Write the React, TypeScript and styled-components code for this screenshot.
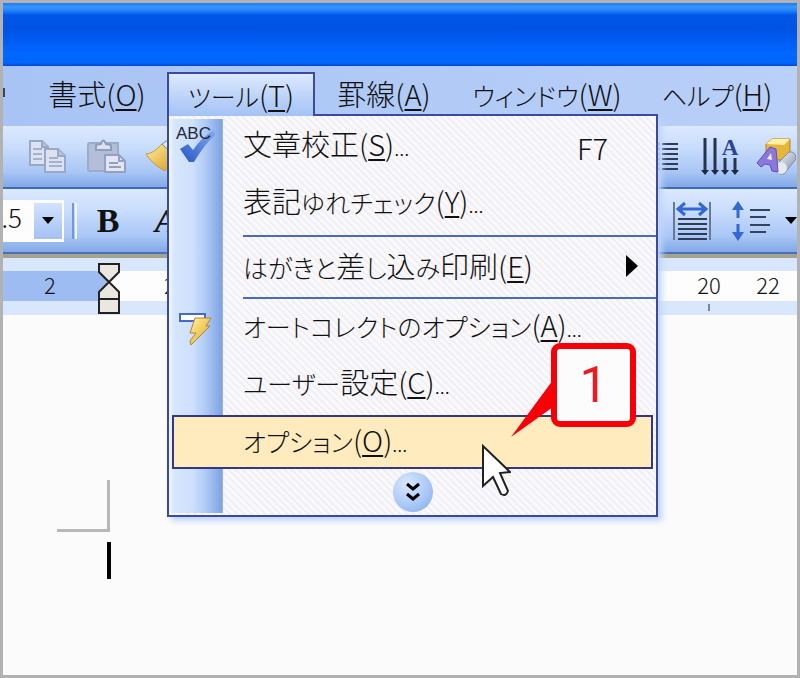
import React from "react";
import styled, { createGlobalStyle, css } from "styled-components";

const GlobalStyle = createGlobalStyle`
  * { box-sizing: border-box; }
  html, body { margin: 0; padding: 0; }
  body {
    background: #fbfbfb;
    color: #101010;
    font-family: "Noto Sans CJK JP", "Liberation Sans", sans-serif;
    font-weight: 300;
    font-feature-settings: "palt";
  }
  button, input {
    margin: 0;
    padding: 0;
    border: 0;
    background: none;
    color: inherit;
    font: inherit;
    font-feature-settings: inherit;
  }
  ul { margin: 0; padding: 0; list-style: none; }
  svg { flex: none; }
`;

const Window = styled.main`
  display: flex;
  flex-direction: column;
  width: 100%;
  min-height: 100vh;
  overflow: hidden;
  background: #fbfbfb;
  border: 3px solid #b2b2b2;
`;

const TitleBar = styled.header`
  height: 63px;
  background: linear-gradient(#1c78f8 0, #3a97ff 4px, #1f80fb 8px, #0058e8 12px, #0052e2 24px, #005cf4 38px, #0068ff 50px, #0066fc 60px, #0a44cc 63px);
`;

const MenuBar = styled.nav`
  display: flex;
  height: 60px;
  padding-top: 6px;
  background: linear-gradient(90deg, #a8c4f4, #b9d0f8);
`;

const MenuEntry = styled.div`
  position: relative;
  flex: none;
`;

const MenuTitle = styled.button<{ $open?: boolean; $width?: number }>`
  min-width: ${({ $width }) => $width ?? 24}px;
  height: 42px;
  font-size: 29px;
  line-height: 38px;
  white-space: nowrap;
  border: 2px solid transparent;
  ${({ $open }) =>
    $open &&
    css`
      position: relative;
      z-index: 3;
      height: 44px;
      border-color: #3b4a9e;
      border-bottom: 0;
      background: linear-gradient(#dce9fd, #a3c2f5);
    `}
`;

const ClippedTitle = styled(MenuTitle)`
  display: flex;
  align-items: center;
  overflow: hidden;
  border-left: 0;
`;

const Kana = styled.span`
  font-size: 25px;
`;

const Key = styled.span`
  font-size: 29px;
  font-feature-settings: normal;
`;

const Mnemonic = styled.u`
  text-decoration-thickness: 2px;
  text-underline-offset: 3px;
`;

const Ellipsis = styled.span`
  font-family: "Liberation Sans", sans-serif;
  font-size: 18px;
`;

const Dropdown = styled.ul`
  position: absolute;
  z-index: 2;
  top: 42px;
  left: 0;
  width: 491px;
  padding: 2px 0 0;
  border: 2px solid #3b4a9e;
  box-shadow: 4px 4px 6px #bfd5fb;
  background:
    linear-gradient(90deg, #f4f8ff 0, #d6e6fd 5px, #cde0fc 24px, #b0cbf6 36px, #7ea3e3 53px, #a9bfea 54px) 0 3px / 54px calc(100% - 5px) no-repeat,
    repeating-linear-gradient(45deg, #f9f8fb 0 3px, #f1eff4 3px 5px);
`;

const Command = styled.button<{ $active?: boolean }>`
  display: grid;
  grid-template-columns: 54px 1fr auto;
  grid-template-rows: 100%;
  align-items: center;
  width: 100%;
  height: 57px;
  font-size: 29px;
  line-height: 40px;
  text-align: left;
  white-space: nowrap;
  ${({ $active }) =>
    $active &&
    css`
      grid-template-columns: 49px 1fr auto;
      width: calc(100% - 6px);
      height: 54px;
      margin: 2px 3px 1px;
      border: 2px solid #34397f;
      background: #ffebbd;
    `}
`;

const CommandIcon = styled.span`
  align-self: start;
  height: 48px;
  padding-left: 6px;
`;

const CommandLabel = styled.span`
  padding-left: 20px;
`;

const Shortcut = styled.span`
  padding-right: 48px;
  font-size: 29px;
`;

const SubmenuArrow = styled.svg`
  margin-right: 18px;
`;

const Divider = styled.li`
  height: 5px;
  margin-left: 74px;
  border-bottom: 2px solid #4a6cb8;
`;

const MoreRow = styled.li`
  display: flex;
  justify-content: center;
  height: 45px;
  padding-top: 2px;
`;

const MoreButton = styled.button`
  display: grid;
  place-items: center;
  width: 40px;
  height: 40px;
  border-radius: 50%;
  background: radial-gradient(circle at 35% 30%, #d9e8fe, #a6c5f6 60%, #7da6ea);
`;

const Toolbar = styled.div`
  display: flex;
  align-items: center;
  height: 63px;
  border-bottom: 2px solid #3f68b6;
  background: linear-gradient(#dce9fe 0, #c9ddfc 35%, #a9c6f5 75%, #82a9e8);
`;

const FormatBar = styled(Toolbar)`
  height: 65px;
  border-bottom-color: #4770b8;
`;

const Tool = styled.button<{ $width: number }>`
  display: flex;
  flex: none;
  align-items: center;
  justify-content: center;
  width: ${({ $width }) => $width}px;
  height: 48px;
`;

const Tools = styled.div<{ $end?: boolean }>`
  display: flex;
  align-items: center;
  height: 100%;
  ${({ $end }) => $end && "margin-left: auto;"}
`;

const SizeBox = styled.div`
  display: flex;
  align-items: center;
  justify-content: flex-end;
  width: 61px;
  height: 42px;
  padding-right: 2px;
  overflow: hidden;
  background: #fdfdfd;
`;

const SizeInput = styled.input`
  flex: none;
  align-self: flex-start;
  width: 60px;
  height: 34px;
  margin-right: 12px;
  font-size: 26px;
  text-align: right;
`;

const SizeArrow = styled.button`
  display: grid;
  flex: none;
  place-items: center;
  width: 28px;
  height: 36px;
  background: linear-gradient(#d3e3fd, #a3c1f3);
`;

const Groove = styled.span`
  width: 5px;
  height: 36px;
  margin: 0 13px 0 8px;
  border-left: 2px solid #7596d6;
  border-right: 2px solid #f0f6ff;
`;

const Letter = styled.span<{ $italic?: boolean }>`
  font-family: "Liberation Serif", serif;
  font-size: 34px;
  font-weight: 700;
  font-style: ${({ $italic }) => ($italic ? "italic" : "normal")};
  color: #111;
`;

const Ruler = styled.div`
  display: flex;
  height: 61px;
  padding-left: 17px;
  border-top: 4px solid #a5a28f;
  background:
    linear-gradient(#9dbcf2, #9dbcf2) 0 13px / 106px 30px no-repeat,
    linear-gradient(#d8e7fc 13px, #fdfdfd 13px 43px, #d8e7fc 43px);
`;

const RulerMark = styled.span<{ $last?: boolean }>`
  display: flex;
  flex: none;
  flex-direction: column;
  align-items: center;
  width: ${({ $last }) => ($last ? 58 : 60)}px;
  padding-top: 13px;
  font-size: 22px;
  line-height: 26px;
`;

const RulerFill = styled.span`
  flex: 1;
`;

const Tick = styled.i`
  width: 2px;
  height: 7px;
  margin-top: 7px;
  background: #7b8796;
`;

const IndentMarker = styled.svg`
  margin: -9px 2px 0 0;
`;

const Page = styled.section`
  flex: 1;
  padding: 165px 0 0 54px;
`;

const MarginCorner = styled.div`
  width: 53px;
  height: 52px;
  border: solid #b8b8b8;
  border-width: 0 3px 3px 0;
`;

const Caret = styled.div`
  width: 4px;
  height: 37px;
  margin: 10px 0 0 50px;
  background: #000;
`;

const Callout = styled.div`
  position: absolute;
  z-index: 5;
  top: 271px;
  left: 384px;
  display: grid;
  place-items: center;
  width: 85px;
  height: 84px;
  border: 6px solid #f80008;
  border-radius: 9px;
  background: #fcfcfc;
  color: #f01820;
  font-family: Roboto, "Liberation Sans", sans-serif;
  font-size: 50px;
  font-weight: 400;
  line-height: 60px;
`;

const CalloutTail = styled.svg`
  position: absolute;
  z-index: 4;
  top: 308px;
  left: 343px;
`;

const Pointer = styled.svg`
  position: absolute;
  z-index: 4;
  top: 372px;
  left: 314px;
`;

function CopyIcon() {
  return (
    <svg width="38" height="34" viewBox="0 0 38 34">
      <g fill="#dce2ef" stroke="#9aa8c8" strokeWidth="2">
        <path d="M1 1h12l6 6v18H1z" />
        <path d="M13 1v6h6" fill="#b6c1da" />
        <path d="M16 9h13l7 7v16H16z" />
        <path d="M29 9v7h7" fill="#b6c1da" />
      </g>
      <path d="M4 9h9M4 14h9M4 19h9M20 18h9M20 22h13M20 26h13" stroke="#a4b0cd" strokeWidth="2" />
    </svg>
  );
}

function PasteIcon() {
  return (
    <svg width="40" height="35" viewBox="0 0 40 35">
      <path d="M3 4h28v28H3q-2 0-2-2V6q0-2 2-2z" fill="#b3bed8" stroke="#9dabca" strokeWidth="2" />
      <path d="M9 11V6l5-1q2-7 5 0l5 1v5z" fill="#dce2ee" stroke="#8f9dbd" strokeWidth="2" />
      <path d="M18 16h14l6 6v11H18z" fill="#e1e6f1" stroke="#93a2c4" strokeWidth="2" />
      <path d="M32 16v6h6M22 24h9M22 28h12" fill="none" stroke="#93a2c4" strokeWidth="2" />
    </svg>
  );
}

function BrushIcon() {
  return (
    <svg width="36" height="36" viewBox="0 0 36 36">
      <defs>
        <linearGradient id="brush" x1="0" y1="0" x2="1" y2="1">
          <stop offset="0" stopColor="#fff0a0" />
          <stop offset="1" stopColor="#d79a1c" />
        </linearGradient>
      </defs>
      <path d="M1 15q7 0 16-10l14 12-11 15Q7 25 1 15z" fill="url(#brush)" stroke="#c9973a" />
      <path d="M17 5l6-4 9 9-2 7z" fill="#e8e8f0" stroke="#7d85a0" />
    </svg>
  );
}

function LinesIcon() {
  return (
    <svg width="38" height="30" viewBox="0 0 38 30">
      <path d="M18 2h16M18 7h16M18 12h16M18 17h16M18 22h16M18 27h16" stroke="#2d3b57" strokeWidth="2" />
      <path d="M12 2h4M12 7h4M12 12h4M12 17h4M12 22h4M12 27h4" stroke="#3158b4" strokeWidth="3" />
    </svg>
  );
}

function TextDirectionIcon() {
  return (
    <svg width="40" height="46" viewBox="0 -4 40 46">
      <path d="M5 0v34M15 0v34M25 20v14M35 20v14" stroke="#25334d" strokeWidth="3" />
      <path d="M1 32h8l-4 5zM11 32h8l-4 5zM21 32h8l-4 5zM31 32h8l-4 5z" fill="#1c2940" />
      <text x="30" y="17" textAnchor="middle" fontFamily="Liberation Serif, serif" fontSize="23" fontWeight="700" fill="#2d4394">A</text>
    </svg>
  );
}

function DrawingIcon() {
  return (
    <svg width="40" height="38" viewBox="0 0 40 38">
      <defs>
        <linearGradient id="can" x1="0" y1="0" x2="1" y2="1">
          <stop offset="0" stopColor="#fafcff" />
          <stop offset="1" stopColor="#7c89a6" />
        </linearGradient>
      </defs>
      <path d="M10 6l6-5h18v14l-6 7H10z" fill="#e6b63a" stroke="#ad842b" />
      <path d="M10 6l6-5h18l-6 6z" fill="#fff0a4" />
      <path d="M19 28l14-14q7-1 7 7L28 36q-9 1-9-8z" fill="url(#can)" stroke="#7f8cab" />
      <circle cx="25" cy="30" r="6" fill="#e5eaf4" />
      <path d="M1 25L14 9l6 2 2 23-6-1-2-6-5-1-4 3z" fill="#8c78dc" stroke="#6250b2" />
      <path d="M11 21l4-6 1 7z" fill="#f0eefe" />
    </svg>
  );
}

function DistributeIcon() {
  return (
    <svg width="40" height="38" viewBox="0 0 40 38">
      <path d="M2 0v38M38 0v38" stroke="#6a7890" strokeWidth="2" />
      <path d="M6 7h28M13 1L6 7l7 6M27 1l7 6-7 6" fill="none" stroke="#3467d2" strokeWidth="3" />
      <path d="M6 17h29M6 22h29M6 27h29M6 32h29M6 37h29" stroke="#2f3c52" strokeWidth="2" />
    </svg>
  );
}

function LineSpacingIcon() {
  return (
    <svg width="40" height="40" viewBox="0 0 40 40">
      <path d="M7 5v12M7 23v12" stroke="#3467d2" strokeWidth="3" />
      <path d="M7 0l6 9H1zM7 40l6-9H1z" fill="#3467d2" />
      <path d="M19 9h20M19 16h16M19 24h20M19 31h16" stroke="#34445f" strokeWidth="2" />
    </svg>
  );
}

function SpellIcon() {
  return (
    <svg width="44" height="48" viewBox="0 0 44 48">
      <defs>
        <linearGradient id="check" x1="0" y1="1" x2="1" y2="0">
          <stop offset="0" stopColor="#2457c6" />
          <stop offset="1" stopColor="#86a8ee" />
        </linearGradient>
      </defs>
      <path d="M5 31l8-5 5 6Q26 20 39 12l1 5Q29 27 19 44h-5z" fill="url(#check)" />
      <text x="1" y="21" fontFamily="Liberation Sans, sans-serif" fontSize="17" fill="#1f2736">ABC</text>
    </svg>
  );
}

function AutoCorrectIcon() {
  return (
    <svg width="44" height="48" viewBox="0 0 44 48">
      <defs>
        <linearGradient id="bolt" x1="0" y1="0" x2="1" y2="1">
          <stop offset="0" stopColor="#fff4a0" />
          <stop offset="1" stopColor="#e0a11c" />
        </linearGradient>
      </defs>
      <path d="M5 15h25v7H5z" fill="#fff" stroke="#4468cc" strokeWidth="2" />
      <path d="M20 19h16l-5 8h4L16 46l-1-4 6-8h-6z" fill="url(#bolt)" stroke="#b58436" strokeWidth="1" />
    </svg>
  );
}

type Item = { text: string; mnemonic: string; more?: boolean };

function Label({ text, mnemonic, more }: Item) {
  const runs = text.split(/([\u3040-\u30ff]+)/).filter(Boolean);
  return (
    <>
      {runs.map((run, i) => (/[\u3040-\u30ff]/.test(run) ? <Kana key={i}>{run}</Kana> : run))}
      <Key>(<Mnemonic>{mnemonic}</Mnemonic>)</Key>
      {more && <Ellipsis>...</Ellipsis>}
    </>
  );
}

function ToolsMenu() {
  return (
    <Dropdown aria-label="ツール">
      <li>
        <Command>
          <CommandIcon><SpellIcon /></CommandIcon>
          <CommandLabel><Label text="文章校正" mnemonic="S" more /></CommandLabel>
          <Shortcut>F7</Shortcut>
        </Command>
      </li>
      <li>
        <Command>
          <CommandIcon />
          <CommandLabel><Label text="表記ゆれチェック" mnemonic="Y" more /></CommandLabel>
        </Command>
      </li>
      <Divider role="separator" />
      <li>
        <Command>
          <CommandIcon />
          <CommandLabel><Label text="はがきと差し込み印刷" mnemonic="E" /></CommandLabel>
          <SubmenuArrow width="12" height="22" viewBox="0 0 12 22"><path d="M0 0l12 11L0 22z" fill="#000" /></SubmenuArrow>
        </Command>
      </li>
      <Divider role="separator" />
      <li>
        <Command>
          <CommandIcon><AutoCorrectIcon /></CommandIcon>
          <CommandLabel><Label text="オートコレクトのオプション" mnemonic="A" more /></CommandLabel>
        </Command>
      </li>
      <li>
        <Command>
          <CommandIcon />
          <CommandLabel><Label text="ユーザー設定" mnemonic="C" more /></CommandLabel>
        </Command>
      </li>
      <li>
        <Command $active>
          <CommandIcon />
          <CommandLabel><Label text="オプション" mnemonic="O" more /></CommandLabel>
        </Command>
      </li>
      <MoreRow>
        <MoreButton aria-label="すべて表示">
          <svg width="14" height="20" viewBox="0 0 14 20">
            <path d="M1 2l6 5 6-5M1 12l6 5 6-5" fill="none" stroke="#000" strokeWidth="3" />
          </svg>
        </MoreButton>
      </MoreRow>
    </Dropdown>
  );
}

export default function App() {
  return (
    <>
      <GlobalStyle />
      <Window>
        <TitleBar />
        <MenuBar>
          <ClippedTitle aria-label="挿入">
            <svg width="3" height="10" viewBox="0 0 3 10"><path d="M0 0h2v9H0z" fill="#39455e" /></svg>
          </ClippedTitle>
          <MenuEntry><MenuTitle $width={140}><Label text="書式" mnemonic="O" /></MenuTitle></MenuEntry>
          <MenuEntry>
            <MenuTitle $open $width={148}><Label text="ツール" mnemonic="T" /></MenuTitle>
            <ToolsMenu />
            <CalloutTail width="50" height="60" viewBox="0 0 50 60"><path d="M43 0L1 57 43 27z" fill="#f80008" /></CalloutTail>
            <Callout>1</Callout>
            <Pointer width="30" height="54" viewBox="0 0 30 54">
              <path d="M2 2v40l10-9 8 17q5 3 7-3l-8-18 10-1z" fill="#fff" stroke="#222" strokeWidth="2" />
            </Pointer>
          </MenuEntry>
          <MenuEntry><MenuTitle $width={138}><Label text="罫線" mnemonic="A" /></MenuTitle></MenuEntry>
          <MenuEntry><MenuTitle $width={188}><Label text="ウィンドウ" mnemonic="W" /></MenuTitle></MenuEntry>
          <MenuEntry><MenuTitle $width={152}><Label text="ヘルプ" mnemonic="H" /></MenuTitle></MenuEntry>
        </MenuBar>
        <Toolbar>
          <Tools>
            <Tool $width={90} aria-label="コピー"><CopyIcon /></Tool>
            <Tool $width={28} aria-label="貼り付け"><PasteIcon /></Tool>
            <Tool $width={84} aria-label="書式のコピー"><BrushIcon /></Tool>
          </Tools>
          <Tools $end>
            <Tool $width={46} aria-label="段組み"><LinesIcon /></Tool>
            <Tool $width={68} aria-label="文字列の方向"><TextDirectionIcon /></Tool>
            <Tool $width={43} aria-label="図形描画"><DrawingIcon /></Tool>
          </Tools>
        </Toolbar>
        <FormatBar>
          <SizeBox>
            <SizeInput aria-label="フォント サイズ" defaultValue="10.5" />
            <SizeArrow aria-label="サイズ一覧">
              <svg width="12" height="7" viewBox="0 0 12 7"><path d="M0 0h12L6 7z" fill="#000" /></svg>
            </SizeArrow>
          </SizeBox>
          <Groove />
          <Tool $width={36} aria-label="太字"><Letter>B</Letter></Tool>
          <Tool $width={80} aria-label="斜体"><Letter $italic>A</Letter></Tool>
          <Tools $end>
            <Tool $width={50} aria-label="均等割り付け"><DistributeIcon /></Tool>
            <Tool $width={68} aria-label="行間"><LineSpacingIcon /></Tool>
            <Tool $width={12} aria-label="行間の一覧">
              <svg width="12" height="7" viewBox="0 0 12 7"><path d="M0 0h12L6 7z" fill="#000" /></svg>
            </Tool>
          </Tools>
        </FormatBar>
        <Ruler>
          <RulerMark>2</RulerMark>
          <RulerMark>
            <IndentMarker width="24" height="54" viewBox="0 0 24 54">
              <path d="M2 2h20v8L12 20 2 10zM12 20l10 10v7H2v-7zM2 37h20v14H2z" fill="#e9e7df" stroke="#222" strokeWidth="2" />
            </IndentMarker>
          </RulerMark>
          <RulerMark>2</RulerMark>
          <RulerFill />
          <RulerMark>20<Tick /></RulerMark>
          <RulerMark $last>22</RulerMark>
        </Ruler>
        <Page>
          <MarginCorner />
          <Caret />
        </Page>
      </Window>
    </>
  );
}
